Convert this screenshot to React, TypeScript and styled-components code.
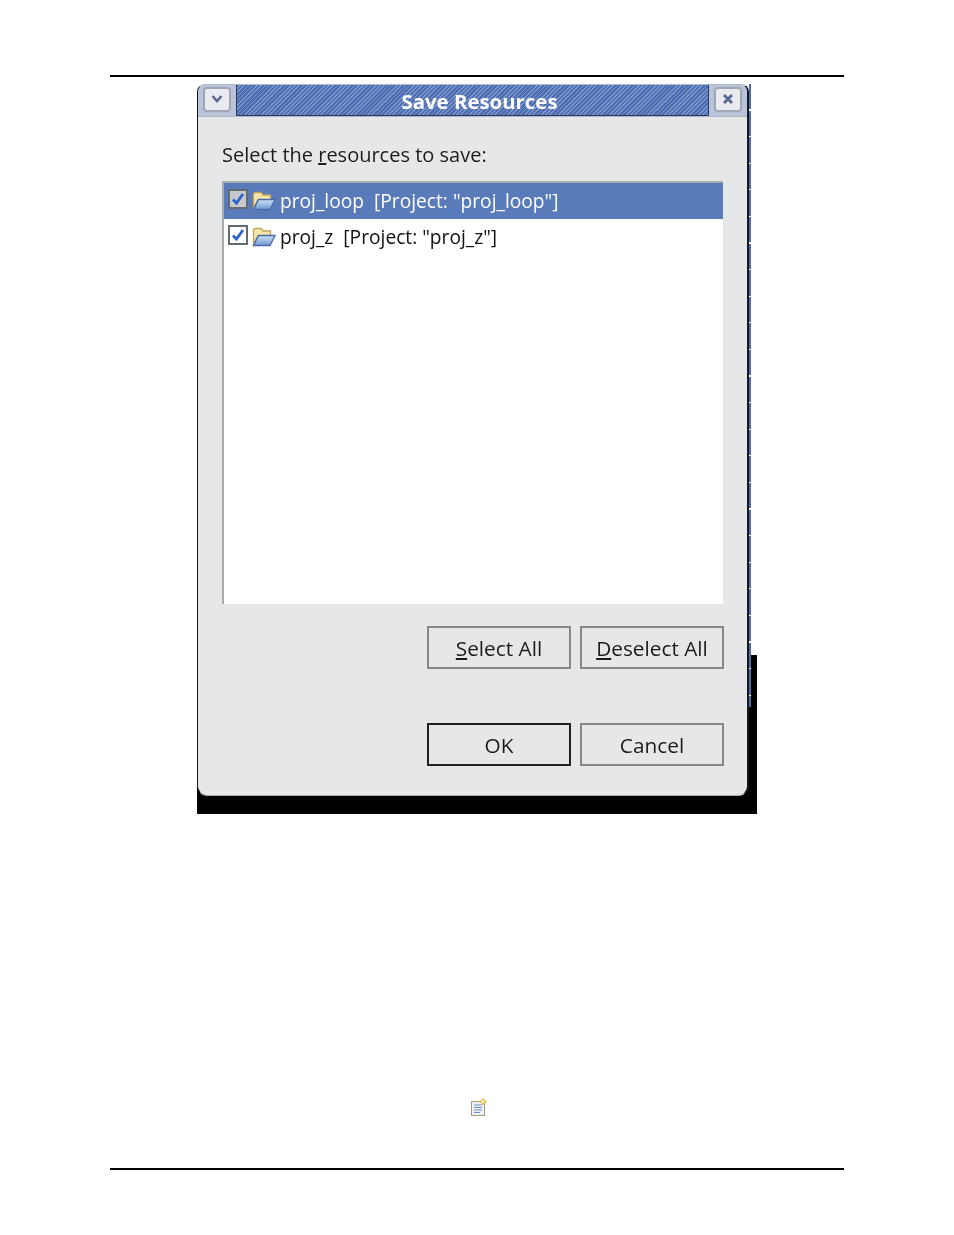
import styled, { createGlobalStyle } from 'styled-components';

const GlobalStyle = createGlobalStyle`
    html, body {
        margin: 0;
        padding: 0;
        background: #ffffff;
    }
`;

const uiFont = `"Open Sans", "Liberation Sans", sans-serif`;

const CheckMark = () => (
    <svg width="14" height="14" viewBox="0 0 14 14">
        <path d="M2 7.5 L5.5 11 L12 2" fill="none" stroke="#2a62cc" strokeWidth="2.8" />
    </svg>
);

const FolderIcon = ({ id }: { id: string }) => (
    <svg width="24" height="20" viewBox="0 0 24 20">
        <defs>
            <linearGradient id={id} x1="0" y1="0" x2="0" y2="1">
                <stop offset="0" stopColor="#cfe0f6" />
                <stop offset="1" stopColor="#6f9ad4" />
            </linearGradient>
        </defs>
        <path d="M1.5 17 V3.5 Q1.5 1.5 3.5 1.5 H9 L11 4 H18.5 V9 H6 Z" fill="#f8e6a8" stroke="#c2a458" strokeWidth="1.3" />
        <path d="M1.5 18.5 L6.5 8.5 H23 L18 18.5 Z" fill={`url(#${id})`} stroke="#4a6aa8" strokeWidth="1.3" />
    </svg>
);

const MenuGlyph = () => (
    <svg width="14" height="10" viewBox="0 0 14 10">
        <path d="M2.5 2 L7 7 L11.5 2" fill="none" stroke="#5a6a90" strokeWidth="2.6" />
    </svg>
);

const CloseGlyph = () => (
    <svg width="12" height="12" viewBox="0 0 12 12">
        <path d="M2 2 L10 10 M10 2 L2 10" fill="none" stroke="#5a6a90" strokeWidth="3" />
    </svg>
);

const NewNoteIcon = () => (
    <svg width="18" height="18" viewBox="0 0 18 18">
        <rect x="1.5" y="3.5" width="13" height="14" fill="#eef2f8" stroke="#a89c78" />
        <path d="M4 7 H12 M4 9.5 H12 M4 12 H12 M4 14.5 H10" stroke="#6f90c0" strokeWidth="1.2" />
        <path d="M13 0.5 V7 M9.8 3.7 H16.5" stroke="#e8c050" strokeWidth="2.2" />
        <circle cx="13" cy="3.7" r="1.2" fill="#fff6c8" />
    </svg>
);

const rows = [
    { name: 'proj_loop', selected: true },
    { name: 'proj_z', selected: false },
];

const App = () => {
    return (
        <Page>
            <GlobalStyle />
            <Rule />
            <Shot>
                <Dialog>
                    <TitleBar>
                        <TitleCap>
                            <TitleButton><MenuGlyph /></TitleButton>
                        </TitleCap>
                        <TitleStrip>Save Resources</TitleStrip>
                        <TitleCap>
                            <TitleButton><CloseGlyph /></TitleButton>
                        </TitleCap>
                    </TitleBar>
                    <Body>
                        <Prompt>Select the <Mnemonic>r</Mnemonic>esources to save:</Prompt>
                        <List>
                            {rows.map((row) => (
                                <Row key={row.name} $selected={row.selected}>
                                    <CheckBox $selected={row.selected}><CheckMark /></CheckBox>
                                    <FolderIcon id={`folder-${row.name}`} />
                                    <RowLabel>{`${row.name}  [Project: "${row.name}"]`}</RowLabel>
                                </Row>
                            ))}
                        </List>
                        <SelectRow>
                            <Button><Mnemonic>S</Mnemonic>elect All</Button>
                            <Button><Mnemonic>D</Mnemonic>eselect All</Button>
                        </SelectRow>
                        <ConfirmRow>
                            <Button $primary>OK</Button>
                            <Button>Cancel</Button>
                        </ConfirmRow>
                    </Body>
                </Dialog>
                <EdgeStrip />
            </Shot>
            <IconLine>
                <NewNoteIcon />
            </IconLine>
            <Rule />
        </Page>
    );
};

export default App;

const Page = styled.div`
    width: 954px;
    height: 1235px;
    box-sizing: border-box;
    padding-top: 75px;
    overflow: hidden;
    background: #ffffff;
`;

const Rule = styled.div`
    width: 734px;
    height: 2px;
    margin-left: 110px;
    background: #000000;
`;

const Shot = styled.div`
    display: flex;
    align-items: flex-start;
    width: 560px;
    height: 730px;
    margin: 7px 0 0 197px;
    background: linear-gradient(to bottom, transparent 571px, #000000 571px);
`;

const Dialog = styled.div`
    width: 552px;
    height: 712px;
    box-sizing: border-box;
    border: solid #16181c;
    border-width: 1px 2px 1px 1px;
    border-top-color: #aeb8d0;
    border-bottom-color: #a8a9ab;
    border-radius: 8px 8px 10px 10px;
    background: #e6e7e9;
    overflow: hidden;
    filter: blur(0.45px);
`;

const EdgeStrip = styled.div`
    width: 2px;
    height: 623px;
    background: repeating-linear-gradient(to bottom, #4a6cb0 0 25.4px, #ffffff 25.4px 26.6px);
`;

const TitleBar = styled.div`
    display: flex;
    height: 31px;
    border-bottom: 1px solid #b0b8c8;
`;

const TitleCap = styled.div`
    display: flex;
    align-items: center;
    justify-content: center;
    width: 38px;
    flex: none;
    background: #b9c3da;
`;

const TitleButton = styled.div`
    display: flex;
    align-items: center;
    justify-content: center;
    width: 28px;
    height: 25px;
    box-sizing: border-box;
    margin-top: -3px;
    border: 2px solid #a0a6b6;
    border-radius: 4px;
    background: #e9ebf1;
`;

const TitleStrip = styled.div`
    flex: 1;
    box-sizing: border-box;
    padding-left: 14px;
    text-align: center;
    font: 700 20.4px/32px ${uiFont};
    color: #ffffff;
    border: solid #2a3a5c;
    border-width: 0 1px 1px 1px;
    background: repeating-linear-gradient(135deg, #4c6db2 0 1.8px, #7c96cb 1.8px 3px);
`;

const Body = styled.div`
    padding: 0 23px 0 24px;
`;

const Prompt = styled.div`
    margin-top: 23px;
    height: 41px;
    font: 400 20px/30px ${uiFont};
    color: #1c1c1c;
`;

const Mnemonic = styled.span`
    text-decoration: underline;
`;

const List = styled.div`
    width: 501px;
    height: 423px;
    box-sizing: border-box;
    border: solid #a9aaac;
    border-width: 2px 0 0 2px;
    background: #ffffff;
`;

const Row = styled.div<{ $selected: boolean }>`
    display: flex;
    align-items: center;
    height: 36px;
    padding-left: 4px;
    background: ${({ $selected }) => ($selected ? '#5a7bb9' : '#ffffff')};
    color: ${({ $selected }) => ($selected ? '#ffffff' : '#111111')};
`;

const CheckBox = styled.div<{ $selected: boolean }>`
    display: flex;
    align-items: center;
    justify-content: center;
    width: 20px;
    height: 20px;
    box-sizing: border-box;
    margin: -4px 4px 0 0;
    border: 2px solid #666a70;
    background: ${({ $selected }) => ($selected ? '#c6c8cc' : '#ffffff')};
`;

const RowLabel = styled.span`
    margin-left: 4px;
    white-space: pre;
    font: 400 19.2px/36px ${uiFont};
`;

const SelectRow = styled.div`
    display: flex;
    justify-content: flex-end;
    gap: 9px;
    margin-top: 22px;
`;

const ConfirmRow = styled(SelectRow)`
    margin-top: 54px;
`;

const Button = styled.div<{ $primary?: boolean }>`
    width: 144px;
    height: 43px;
    box-sizing: border-box;
    text-align: center;
    font: 400 20.8px/41px ${uiFont};
    color: #1c1c1c;
    background: #e6e7e9;
    border: 2px solid ${({ $primary }) => ($primary ? '#1e2024' : '#85878a')};
`;

const IconLine = styled.div`
    display: flex;
    height: 354px;
    padding: 284px 0 0 470px;
    box-sizing: border-box;
`;
